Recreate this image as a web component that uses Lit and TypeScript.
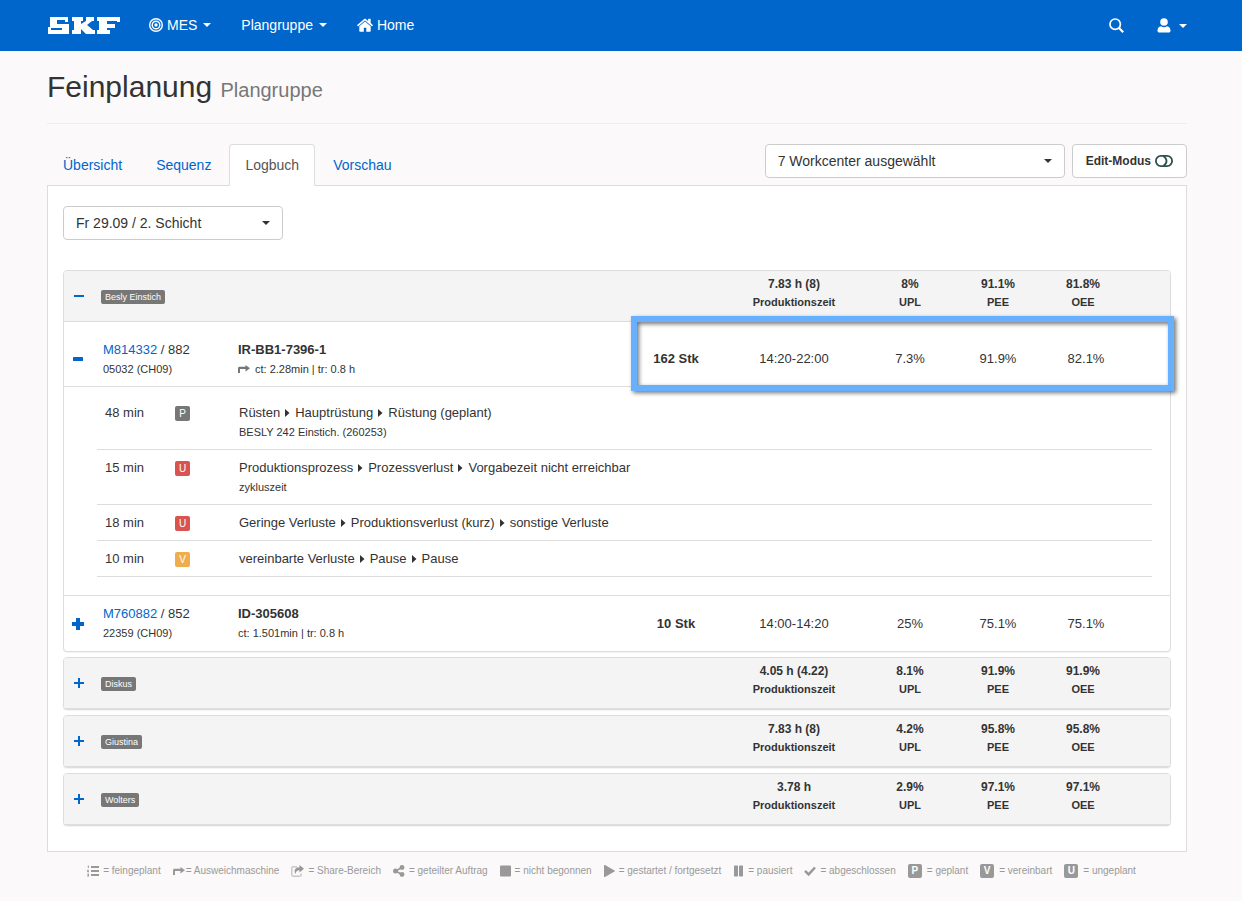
import { LitElement, html, svg, css, nothing } from "lit";
import { customElement, property } from "lit/decorators.js";

const glyphs: Record<string, { box: string; body: unknown }> = {
  target: {
    box: "0 0 14 14",
    body: svg`<g fill="none" stroke="currentColor"><circle cx="7" cy="7" r="6.3" stroke-width="1.4"/><circle cx="7" cy="7" r="3.8" stroke-width="1.4"/></g><circle cx="7" cy="7" r="1.7" fill="currentColor"/>`,
  },
  home: {
    box: "0 0 16 14",
    body: svg`<path fill="currentColor" d="M8 3.4 2.3 8.2v4.9c0 .4.3.7.7.7h3.8V9.8h2.5v4H13c.4 0 .7-.3.7-.7V8.2zM15.8 6.9l-2.1-1.8V1.2c0-.2-.2-.4-.4-.4h-1.8c-.2 0-.4.2-.4.4V3L8.8 1c-.5-.4-1.1-.4-1.6 0L.2 6.9c-.2.1-.2.3-.1.5l.6.7c.1.2.4.2.5.1L8 2.5l6.8 5.7c.1.1.4.1.5-.1l.6-.7c.1-.2.1-.4-.1-.5z"/>`,
  },
  search: {
    box: "0 0 15 15",
    body: svg`<g fill="none" stroke="currentColor"><circle cx="6.2" cy="6.2" r="5.2" stroke-width="1.7"/><path d="m9.8 9.8 4.400 4.400" stroke-width="2.200"/></g>`,
  },
  user: {
    box: "0 0 14 15",
    body: svg`<circle fill="currentColor" cx="7" cy="4" r="3.800"/><path fill="currentColor" d="M4 8.200c.9.700 1.900 1 3 1s2.100-.300 3-1c2.400.300 3.500 2 3.500 4.300 0 1.400-.7 2.100-2 2.100h-9c-1.300 0-2-.7-2-2.100C.5 10.200 1.600 8.500 4 8.200z"/>`,
  },
  caret: { box: "0 0 8 4", body: svg`<path fill="currentColor" d="M0 0h8L4 4z"/>` },
  toggle: {
    box: "0 0 18 12",
    body: svg`<g fill="none" stroke="currentColor" stroke-width="1.800"><rect x=".9" y=".9" width="16.200" height="10.200" rx="5.100"/><path d="M8.500 1.200c4 2.500 4 7.100 0 9.600"/></g>`,
  },
  plus: { box: "0 0 12 12", body: svg`<path fill="currentColor" d="M5 1h2v4h4v2H7v4H5V7H1V5h4z"/>` },
  minus: { box: "0 0 12 12", body: svg`<path fill="currentColor" d="M1 5h10v2H1z"/>` },
  plusBold: { box: "0 0 12 12", body: svg`<path fill="currentColor" d="M4 0h4v4h4v4H8v4H4V8H0V4h4z"/>` },
  minusBold: { box: "0 0 12 12", body: svg`<rect fill="currentColor" x="1" y="4" width="10" height="4" rx=".6"/>` },
  right: { box: "0 0 5 8", body: svg`<path fill="currentColor" d="M0 0 4.500 4 0 8z"/>` },
  detour: {
    box: "0 0 12 8",
    body: svg`<path fill="currentColor" d="M0 8V3.500C0 2.200.7 1.800 1.800 1.800H7.500V0L12 3.200 7.500 6.400V4H2v4z"/>`,
  },
  list: {
    box: "0 0 12 12",
    body: svg`<path fill="currentColor" d="M4 1h8v2H4zM4 5h8v2H4zM4 9h8v2H4zM.8.500h1V3h-1zM.3 4.700h1.600v1H1.300v.5h.7v1H.2V6zM.2 8.800h1.800v2.700H.2v-.8h1V10.500h-.8v-.7h.8v-.3h-1z"/>`,
  },
  share: {
    box: "0 0 13 12",
    body: svg`<path fill="none" stroke="currentColor" stroke-width="1.500" opacity=".5" d="M6 1.800H2.200C1.400 1.800.8 2.400.8 3.200v6.600c0 .8.600 1.400 1.400 1.400h6.600c.8 0 1.400-.6 1.400-1.400V8.500"/><path fill="currentColor" d="M8.500 0 13 3.800 8.500 7.500V5.300C6.500 5.300 5 6 4.600 9 2.500 5.500 4 2.300 8.500 2.200z"/>`,
  },
  nodes: {
    box: "0 0 12 12",
    body: svg`<g fill="currentColor"><circle cx="9" cy="2.500" r="2.400"/><circle cx="2.500" cy="6" r="2.500"/><circle cx="9" cy="9.500" r="2.400"/></g><path fill="none" stroke="currentColor" stroke-width="1.500" d="M9 2.500 2.500 6 9 9.500"/>`,
  },
  stop: { box: "0 0 11 12", body: svg`<rect fill="currentColor" y=".5" width="11" height="11" rx="1"/>` },
  play: { box: "0 0 11 12", body: svg`<path fill="currentColor" d="M1 0 10.500 5.400c.5.300.5.900 0 1.200L1 12c-.5.200-1 0-1-.5V.5C0 0 .5-.2 1 0z"/>` },
  pause: { box: "0 0 11 12", body: svg`<g fill="currentColor"><rect x="1" y=".5" width="4" height="11" rx=".7"/><rect x="6" y=".5" width="4" height="11" rx=".7"/></g>` },
  check: { box: "0 0 12 12", body: svg`<path fill="none" stroke="currentColor" stroke-width="2.400" d="m1 5.800 3.600 3.600L11 2.500"/>` },
};

const icon = (name: string, w: number, h: number) =>
  html`<svg class="icon" width=${w} height=${h} viewBox=${glyphs[name].box} aria-hidden="true">${glyphs[name].body}</svg>`;

interface Loss { minutes: number; kind: "P" | "U" | "V"; path: string[]; note?: string }
interface Order {
  id: string; op: string; machine: string; article: string; detour?: boolean; times: string;
  qty: string; span: string; upl: string; pee: string; oee: string; marked?: boolean; losses?: Loss[];
}
interface Workcenter { name: string; time: string; upl: string; pee: string; oee: string; orders?: Order[] }

const workcenters: Workcenter[] = [
  {
    name: "Besly Einstich", time: "7.83 h (8)", upl: "8%", pee: "91.1%", oee: "81.8%",
    orders: [
      {
        id: "M814332", op: "882", machine: "05032 (CH09)", article: "IR-BB1-7396-1", detour: true,
        times: "ct: 2.28min | tr: 0.8 h", qty: "162 Stk", span: "14:20-22:00",
        upl: "7.3%", pee: "91.9%", oee: "82.1%", marked: true,
        losses: [
          { minutes: 48, kind: "P", path: ["Rüsten", "Hauptrüstung", "Rüstung (geplant)"], note: "BESLY 242 Einstich. (260253)" },
          { minutes: 15, kind: "U", path: ["Produktionsprozess", "Prozessverlust", "Vorgabezeit nicht erreichbar"], note: "zykluszeit" },
          { minutes: 18, kind: "U", path: ["Geringe Verluste", "Produktionsverlust (kurz)", "sonstige Verluste"] },
          { minutes: 10, kind: "V", path: ["vereinbarte Verluste", "Pause", "Pause"] },
        ],
      },
      {
        id: "M760882", op: "852", machine: "22359 (CH09)", article: "ID-305608",
        times: "ct: 1.501min | tr: 0.8 h", qty: "10 Stk", span: "14:00-14:20",
        upl: "25%", pee: "75.1%", oee: "75.1%",
      },
    ],
  },
  { name: "Diskus", time: "4.05 h (4.22)", upl: "8.1%", pee: "91.9%", oee: "91.9%" },
  { name: "Giustina", time: "7.83 h (8)", upl: "4.2%", pee: "95.8%", oee: "95.8%" },
  { name: "Wolters", time: "3.78 h", upl: "2.9%", pee: "97.1%", oee: "97.1%" },
];

const base = css`
  * { box-sizing: border-box; }
  .icon { display: inline-block; flex: none; fill: none; }
  a { color: #0066cc; text-decoration: none; }
  button { font: inherit; color: inherit; background: none; border: 0; padding: 0; margin: 0; cursor: pointer; }
`;

@customElement("mes-navbar")
export class MesNavbar extends LitElement {
  static styles = [base, css`
    :host { display: block; background: #0066cc; color: #fff; }
    .bar { display: flex; align-items: center; padding: 0 55px 0 48px; }
    .brand { display: block; margin-right: 14px; }
    .brand svg { display: block; }
    nav { display: flex; }
    .item { display: flex; align-items: center; gap: 4px; padding: 15px 15px 16px; line-height: 20px; color: #fff; }
    .drop { display: flex; margin-left: 2px; }
    .tools { display: flex; margin-left: auto; align-items: center; gap: 33px; color: #fff; }
    .tools button { display: flex; align-items: center; gap: 8px; }
  `];
  render() {
    return html`<header class="bar">
      <a class="brand" href="#" aria-label="SKF">
        <svg width="72" height="17" viewBox="0 0 72 17" fill="#fff" aria-hidden="true">
          <path d="M2 0h18v5h-3V3H9v4h12v10H0v-7h3v3h11v-2H2z"/>
          <path d="M24 0h11v4h-2v3l5-3V0h8v4h-2l-5 4 6 5h2v4h-9l-5-5v5H24v-4h2V4h-2z"/>
          <path d="M49 0h23v5h-3V4H59v3h8v4h-8v2h3v4H49v-4h2V4h-2z"/>
        </svg>
      </a>
      <nav>
        <button class="item">${icon("target", 14, 14)}<span>MES</span><span class="drop">${icon("caret", 8, 4)}</span></button>
        <button class="item"><span>Plangruppe</span><span class="drop">${icon("caret", 8, 4)}</span></button>
        <a class="item" href="#">${icon("home", 16, 14)}<span>Home</span></a>
      </nav>
      <div class="tools">
        <button aria-label="Suche">${icon("search", 15, 15)}</button>
        <button aria-label="Benutzer">${icon("user", 14, 15)}${icon("caret", 8, 4)}</button>
      </div>
    </header>`;
  }
}

@customElement("mes-workcenter")
export class MesWorkcenter extends LitElement {
  @property({ attribute: false }) wc!: Workcenter;
  static styles = [base, css`
    :host { display: block; border: 1px solid #ddd; border-radius: 4px; background: #fff; box-shadow: 0 1px 1px rgba(0, 0, 0, .05); }
    table { width: 100%; border-collapse: separate; border-spacing: 0; table-layout: fixed; font-size: 13px; line-height: 20px; }
    th, td { padding: 0; text-align: left; vertical-align: middle; font-weight: 400; }
    .c-toggle { width: 37px; }
    .c-order { width: 137px; }
    .c-qty { width: 92px; }
    .c-time { width: 144px; }
    .c-kpi { width: 88px; }
    .c-end { width: 40px; }
    .head th { background: #f4f4f4; border-bottom: 1px solid #ddd; height: 51px; }
    .head th:first-child { border-top-left-radius: 3px; }
    .head th:last-child { border-top-right-radius: 3px; }
    .head .sum { padding: 4px 0 10px; text-align: center; font-size: 11px; line-height: 18px; font-weight: 700; }
    .head .sum.last { padding-right: 6px; }
    .sum .value { font-size: 12px; }
    .sum span { display: block; }
    .toggle { display: flex; color: #0066cc; margin-left: 9px; }
    .order .toggle { margin-left: 8px; }
    .tag { display: inline-block; vertical-align: middle; background: #777; color: #fff; border-radius: 2px; font-size: 9px; line-height: 14px; padding: 0 4px; }
    .order td { height: 55px; padding: 8px 0; }
    .order.first td { padding-top: 18px; }
    .order .text { vertical-align: top; }
    .order .key { padding-left: 2px; }
    .order:not(:last-child) td { border-bottom: 1px solid #ddd; }
    .order .num { text-align: center; }
    .order, .detail { position: relative; }
    .small { display: flex; align-items: center; gap: 5px; font-size: 11px; line-height: 18px; }
    .small .icon { color: #777; }
    .mark { position: absolute; top: -6px; bottom: -4px; right: -4px; width: 543px; border: 6px solid #66b0ff; filter: drop-shadow(2px 2px 2px rgba(0, 0, 0, .55)); pointer-events: none; z-index: 1; }
    .detail > td { padding: 8px 18px 18px 33px; border-bottom: 1px solid #ddd; }
    .losses td { vertical-align: top; height: 36px; padding: 8px 0 7px; border-bottom: 1px solid #ddd; line-height: 19px; }
    .losses .min { width: 78px; padding-left: 8px; }
    .losses .kind { width: 64px; }
    .losses .small { line-height: 20px; }
    .path { display: flex; align-items: center; gap: 5px; }
    .chip { display: block; width: 15px; height: 15px; margin-top: 3px; border-radius: 2px; color: #fff; font-size: 10px; line-height: 15px; text-align: center; }
    .P { background: #777; }
    .U { background: #d9534f; }
    .V { background: #f0ad4e; }
  `];
  private losses(list: Loss[]) {
    return html`<tr class="detail"><td colspan="9"><table class="losses">
      ${list.map((l) => html`<tr>
        <td class="min">${l.minutes} min</td>
        <td class="kind"><span class="chip ${l.kind}">${l.kind}</span></td>
        <td>
          <div class="path">${l.path.map((p, i) => html`${i ? icon("right", 5, 8) : nothing}<span>${p}</span>`)}</div>
          ${l.note ? html`<div class="small">${l.note}</div>` : nothing}
        </td>
      </tr>`)}
    </table></td></tr>`;
  }
  private order(o: Order, i: number) {
    return html`<tr class="order ${i ? "" : "first"}">
      <td><button class="toggle" aria-label="Auftrag auf- oder zuklappen">${icon(o.losses ? "minusBold" : "plusBold", 12, 12)}</button></td>
      <td class="text key"><a href="#">${o.id}</a> / ${o.op}<div class="small">${o.machine}</div></td>
      <td class="text"><b>${o.article}</b><div class="small">${o.detour ? icon("detour", 12, 8) : nothing}<span>${o.times}</span></div></td>
      <td class="num"><b>${o.qty}</b></td>
      <td class="num">${o.span}</td>
      <td class="num">${o.upl}</td>
      <td class="num">${o.pee}</td>
      <td class="num">${o.oee}</td>
      <td>${o.marked ? html`<div class="mark"></div>` : nothing}</td>
    </tr>
    ${o.losses ? this.losses(o.losses) : nothing}`;
  }
  render() {
    const w = this.wc;
    const sum = (v: string, l: string, last = false) =>
      html`<th class="sum ${last ? "last" : ""}"><span class="value">${v}</span><span>${l}</span></th>`;
    return html`<table>
      <colgroup><col class="c-toggle"><col class="c-order"><col><col class="c-qty"><col class="c-time"><col class="c-kpi"><col class="c-kpi"><col class="c-kpi"><col class="c-end"></colgroup>
      <thead><tr class="head">
        <th><button class="toggle" aria-label="${w.name} auf- oder zuklappen">${icon(w.orders ? "minus" : "plus", 12, 12)}</button></th>
        <th colspan="3"><span class="tag">${w.name}</span></th>
        ${sum(w.time, "Produktionszeit")}${sum(w.upl, "UPL")}${sum(w.pee, "PEE")}${sum(w.oee, "OEE", true)}
        <th></th>
      </tr></thead>
      ${w.orders ? html`<tbody>${w.orders.map((o, i) => this.order(o, i))}</tbody>` : nothing}
    </table>`;
  }
}

@customElement("app-root")
export class AppRoot extends LitElement {
  static styles = [base, css`
    :host { display: block; min-height: 100vh; background: #fbf9fa; color: #333; font: 14px/20px "Liberation Sans", Arial, sans-serif; }
    main { padding: 0 55px 0 47px; }
    h1 { margin: 0; padding: 19px 0 16px; border-bottom: 1px solid #eee; font-size: 30px; line-height: 33px; font-weight: 400; }
    h1 small { font-size: 20px; color: #777; }
    .top { display: flex; align-items: flex-start; margin-top: 20px; }
    .tabs { display: flex; gap: 2px; position: relative; }
    .tab { padding: 10px 15px; border: 1px solid transparent; }
    .tab.active { color: #555; background: #fff; border-color: #ddd #ddd #fff; border-radius: 4px 4px 0 0; }
    .controls { display: flex; gap: 7px; margin-left: auto; }
    .pick { display: grid; align-items: center; }
    .pick select { grid-area: 1 / 1; appearance: none; width: 100%; height: 34px; padding: 0 12px; border: 1px solid #ccc; border-radius: 4px; background: #fff; color: #333; font: inherit; }
    .pick .icon { grid-area: 1 / 1; justify-self: end; margin-right: 13px; pointer-events: none; }
    .centers { width: 300px; }
    .shift { width: 220px; margin-bottom: 30px; }
    .edit { display: flex; align-items: center; gap: 4px; height: 34px; padding: 0 13px; border: 1px solid #ccc; border-radius: 4px; background: #fff; font-size: 12px; font-weight: 700; }
    .edit .icon { color: #2f4f4f; }
    .sheet { margin-top: -1px; border: 1px solid #ddd; background: #fff; padding: 20px 15px 25px; }
    .groups { display: grid; gap: 5px; }
    .legend { display: flex; justify-content: center; flex-wrap: wrap; gap: 12px; margin: 0; padding: 9px 11px 16px 0; list-style: none; font-size: 10px; color: #999; }
    .legend li { display: flex; align-items: center; gap: 4px; }
    .legend .tight { gap: 1px; }
    .legend .lettered { gap: 5px; }
    .letter { width: 14px; border-radius: 2px; background: #999; color: #fff; font-weight: 700; line-height: 14px; text-align: center; }
  `];
  render() {
    const legend: [string, number, number, string][] = [
      ["list", 12, 12, "feingeplant"], ["detour", 12, 8, "Ausweichmaschine"], ["share", 13, 12, "Share-Bereich"],
      ["nodes", 12, 12, "geteilter Auftrag"], ["stop", 11, 12, "nicht begonnen"], ["play", 11, 12, "gestartet / fortgesetzt"],
      ["pause", 11, 12, "pausiert"], ["check", 12, 12, "abgeschlossen"],
    ];
    const letters = [["P", "geplant"], ["V", "vereinbart"], ["U", "ungeplant"]];
    return html`<mes-navbar></mes-navbar>
      <main>
        <h1>Feinplanung <small>Plangruppe</small></h1>
        <div class="top">
          <nav class="tabs">
            <a class="tab" href="#">Übersicht</a><a class="tab" href="#">Sequenz</a>
            <a class="tab active" href="#" aria-current="page">Logbuch</a><a class="tab" href="#">Vorschau</a>
          </nav>
          <div class="controls">
            <div class="pick centers">
              <select aria-label="Workcenter"><option>7 Workcenter ausgewählt</option></select>${icon("caret", 8, 4)}
            </div>
            <button class="edit">Edit-Modus ${icon("toggle", 18, 12)}</button>
          </div>
        </div>
        <section class="sheet">
          <div class="pick shift">
            <select aria-label="Schicht"><option>Fr 29.09 / 2. Schicht</option></select>${icon("caret", 8, 4)}
          </div>
          <div class="groups">${workcenters.map((w) => html`<mes-workcenter .wc=${w}></mes-workcenter>`)}</div>
        </section>
        <ul class="legend">
          ${legend.map(([n, w, h, t]) => html`<li class=${n === "detour" ? "tight" : ""}>${icon(n, w, h)}<span>= ${t}</span></li>`)}
          ${letters.map(([l, t]) => html`<li class="lettered"><span class="letter">${l}</span><span>= ${t}</span></li>`)}
        </ul>
      </main>`;
  }
}
